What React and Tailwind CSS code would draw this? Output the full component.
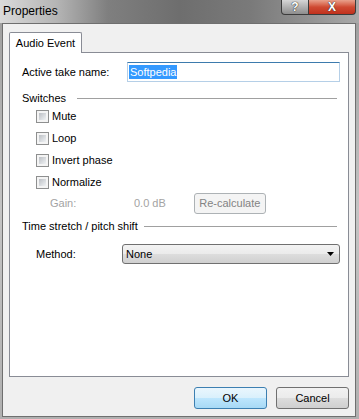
import { useState } from "react";

const Checkbox = ({ label }) => (
  <div className="h-[22px] flex items-center pl-[14px]">
    <span className="w-[13px] h-[13px] border border-[#8e8f8f] bg-[#f4f4f4] p-[2px] flex">
      <span className="flex-1 bg-gradient-to-br from-[#bcc0c5] to-[#f0f2f4]" />
    </span>
    <span className="ml-[3px]">{label}</span>
  </div>
);

const GroupHeader = ({ title, gap }) => (
  <div className="h-[14px] flex items-center pr-[3px]">
    <span className="leading-[14px]">{title}</span>
    <span className={`flex-1 h-px bg-[#a0a0a0] ${gap}`} />
  </div>
);

const App = () => {
  const [name] = useState("Softpedia");

  return (
    <div className="w-[359px] h-[419px] flex flex-col bg-gradient-to-b from-[#9c9c9c] via-[#c4c4c4] to-[#b0b0b0] text-[11px] text-black font-['Liberation_Sans',Arial,sans-serif] overflow-hidden">
      {/* Title bar */}
      <div className="h-[23px] shrink-0 flex items-start justify-between bg-[linear-gradient(90deg,#dadada_0%,#b4b4b4_16%,#7f7f7f_30%,#6e6e6e_50%,#7a7a7a_70%,#909090_85%,#a9a9a9_100%)]">
        <span className="pl-[3px] pt-[3px] text-[12px] leading-[16px]">Properties</span>
        <div className="flex mr-[3px]">
          <div className="w-[28px] h-[15px] flex items-center justify-center rounded-bl-[4px] border border-t-0 border-[#3b3b3b] bg-gradient-to-b from-[#d6d6d6] to-[#8d8d8d]">
            <span className="text-[12px] font-bold leading-none text-white [text-shadow:0_0_1px_#222,0_0_1px_#222]">?</span>
          </div>
          <div className="w-[47px] h-[15px] flex items-center justify-center rounded-br-[4px] border border-l-0 border-t-0 border-[#3b3b3b] bg-gradient-to-b from-[#e8a08c] via-[#cf4a32] to-[#c0301c]">
            <span className="text-[12px] font-bold leading-none text-white [text-shadow:0_0_1px_#333,0_0_1px_#333]">X</span>
          </div>
        </div>
      </div>

      {/* Client area */}
      <div className="flex-1 ml-[2px] mr-[3px] mb-[2px] border border-[#6f6f6f] bg-[#f0f0f0] flex flex-col px-[6px] pt-[8px]">
        <div className="flex">
          <div className="relative z-10 -mb-px w-[73px] h-[21px] bg-white border border-b-0 border-[#898c95] rounded-t-[2px] flex items-center justify-center">
            Audio Event
          </div>
        </div>

        <div className="flex-1 bg-white border border-[#898c95] flex flex-col pl-[12px] pr-[8px] pt-[9px]">
          <div className="h-[20px] flex items-center">
            <span className="w-[105px]">Active take name:</span>
            <div className="flex-1 h-[20px] border border-[#b5cfe7] border-t-[#3d7bad] flex items-center pl-[1px]">
              <span className="bg-[#3399ff] text-white leading-[14px] px-px">{name}</span>
            </div>
          </div>

          <div className="mt-[9px]">
            <GroupHeader title="Switches" gap="ml-[11px]" />
          </div>

          <Checkbox label="Mute" />
          <Checkbox label="Loop" />
          <Checkbox label="Invert phase" />
          <Checkbox label="Normalize" />

          <div className="h-[21px] flex items-center text-[#a3a3a3]">
            <span className="pl-[28px] w-[112px]">Gain:</span>
            <span>0.0 dB</span>
            <span className="ml-[28px] w-[72px] h-[21px] border border-[#adb2b5] rounded-[3px] bg-[#f4f4f4] text-[#838383] flex items-center justify-center">
              Re-calculate
            </span>
          </div>

          <div className="mt-[5px]">
            <GroupHeader title="Time stretch / pitch shift" gap="ml-[6px]" />
          </div>

          <div className="mt-[11px] h-[20px] flex items-center">
            <span className="pl-[14px] w-[100px]">Method:</span>
            <div className="flex-1 h-[20px] border border-[#707070] rounded-[3px] bg-[linear-gradient(180deg,#f3f3f3_0%,#ebebeb_50%,#dddddd_50%,#d0d0d0_100%)] flex items-center justify-between pl-[3px] pr-[5px]">
              <span>None</span>
              <svg width="7" height="4" viewBox="0 0 7 4">
                <path d="M0 0h7L3.5 4z" fill="#000" />
              </svg>
            </div>
          </div>
        </div>

        <div className="flex justify-end gap-[9px] pt-[10px] pb-[7px]">
          <button className="w-[73px] h-[22px] border border-[#3c7fb1] rounded-[3px] bg-[linear-gradient(180deg,#eaf6fd_0%,#d9f0fc_50%,#bee6fd_50%,#a7d9f5_100%)] text-[11px]">
            OK
          </button>
          <button className="w-[73px] h-[22px] border border-[#707070] rounded-[3px] bg-[linear-gradient(180deg,#f2f2f2_0%,#ebebeb_50%,#dddddd_50%,#cfcfcf_100%)] text-[11px]">
            Cancel
          </button>
        </div>
      </div>
    </div>
  );
};

export default App;
